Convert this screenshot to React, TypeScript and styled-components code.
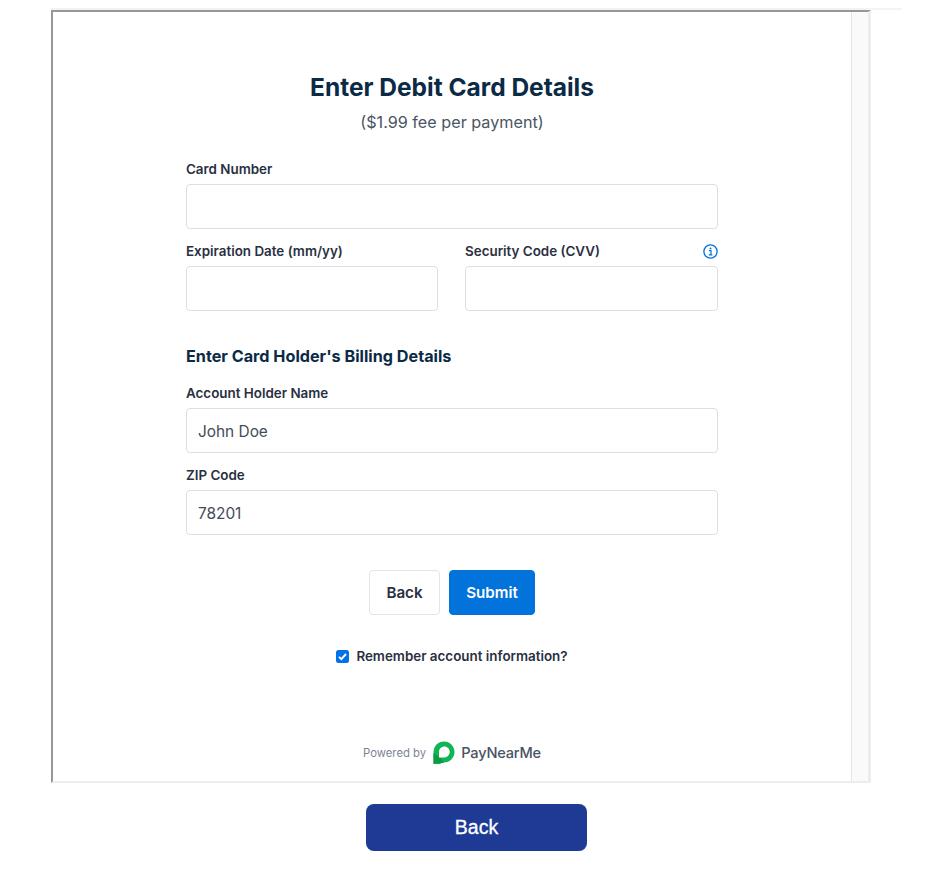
import React from "react";
import styled, { createGlobalStyle } from "styled-components";

const GlobalStyle = createGlobalStyle`
  html, body {
    margin: 0;
    padding: 0;
    background: #fff;
  }
`;

const Page = styled.div`
  width: 952px;
  height: 875px;
  padding: 8px 0 0 51px;
  box-sizing: border-box;
  overflow: hidden;
  display: flex;
  flex-direction: column;
  font-family: Inter, "Liberation Sans", sans-serif;
`;

const TopEdge = styled.div`
  width: 851px;
  height: 2px;
  background: #f3f3f3;
`;

const Frame = styled.div`
  width: 820px;
  height: 773px;
  box-sizing: border-box;
  display: flex;
  border-top: 2px solid #979797;
  border-left: 2px solid #979797;
  border-bottom: 2px solid #ededed;
  border-right: 3px solid #ededed;
`;

const Content = styled.div`
  flex: 1;
  display: flex;
  flex-direction: column;
  align-items: center;
  padding-top: 60px;
`;

const Scrollbar = styled.div`
  width: 16px;
  background: #fafafa;
  border-left: 1px solid #e6e6e6;
`;

const Title = styled.h1`
  margin: 0;
  font-size: 24.5px;
  line-height: 30px;
  font-weight: 700;
  color: #0b2a45;
`;

const Subtitle = styled.p`
  margin: 9px 0 0;
  font-size: 16.2px;
  line-height: 22px;
  color: #4b5563;
`;

const Form = styled.form`
  width: 532px;
  margin-top: 26px;
  display: flex;
  flex-direction: column;
`;

const Field = styled.div`
  min-width: 0;
  display: flex;
  flex-direction: column;
  margin-bottom: 12px;
`;

const LabelRow = styled.div`
  height: 20px;
  margin-bottom: 5px;
  display: flex;
  align-items: center;
  justify-content: space-between;
`;

const Label = styled.label`
  font-size: 13.4px;
  line-height: 20px;
  font-weight: 600;
  color: #2a3042;
`;

const Input = styled.input`
  width: 100%;
  height: 45px;
  box-sizing: border-box;
  padding: 2px 11px 0;
  border: 1px solid #dcdfe3;
  border-radius: 4px;
  background: #fff;
  font-family: inherit;
  font-size: 15.4px;
  color: #444b59;
  outline: none;
`;

const Row = styled.div`
  display: grid;
  grid-template-columns: 252px 253px;
  gap: 27px;
`;

const SectionTitle = styled.h2`
  margin: 21px 0 15px;
  font-size: 16.2px;
  line-height: 24px;
  font-weight: 700;
  color: #0b2a45;
`;

const Actions = styled.div`
  margin-top: 23px;
  display: flex;
  justify-content: center;
  gap: 9px;
`;

const Button = styled.button<{ $primary?: boolean }>`
  height: 45px;
  box-sizing: border-box;
  padding: 0;
  width: ${(p) => (p.$primary ? "86px" : "71px")};
  border: 1px solid ${(p) => (p.$primary ? "#0273db" : "#e2e4e7")};
  border-radius: 4px;
  background: ${(p) => (p.$primary ? "#0273db" : "#fff")};
  color: ${(p) => (p.$primary ? "#fff" : "#2a3042")};
  font-family: inherit;
  font-size: 15.2px;
  font-weight: 600;
`;

const Remember = styled.label`
  margin-top: 31px;
  display: flex;
  align-items: center;
  justify-content: center;
  gap: 7px;
  font-size: 13.4px;
  line-height: 20px;
  font-weight: 600;
  color: #2a3042;
`;

const Check = styled.span`
  width: 13px;
  height: 13px;
  border-radius: 2.5px;
  background: #0273e6;
  display: flex;
  align-items: center;
  justify-content: center;
`;

const Powered = styled.div`
  margin-top: 75px;
  display: flex;
  align-items: center;
  gap: 7px;
`;

const PoweredText = styled.span`
  font-size: 11.3px;
  color: #7b8494;
`;

const Brand = styled.span`
  font-size: 14.6px;
  font-weight: 500;
  letter-spacing: -0.2px;
  color: #4a5263;
  margin-left: -1px;
`;

const Footer = styled.div`
  width: 820px;
  margin-top: 21px;
  display: flex;
  justify-content: center;
`;

const BackLink = styled.button`
  width: 221px;
  height: 47px;
  margin-left: 31px;
  border: none;
  border-radius: 8px;
  background: #1e3a94;
  color: #fff;
  font-family: "Liberation Sans", Arial, sans-serif;
  font-size: 19.5px;
  -webkit-text-stroke: 0.3px #fff;
`;

const InfoIcon = () => (
  <svg width="15" height="15" viewBox="0 0 15 15" fill="none">
    <circle cx="7.5" cy="7.5" r="6.6" stroke="#0273db" strokeWidth="1.3" />
    <circle cx="7.5" cy="4.4" r="1" fill="#0273db" />
    <path d="M6 6.6h2v4M5.8 10.8h3.6" stroke="#0273db" strokeWidth="1.2" />
  </svg>
);

const CheckIcon = () => (
  <svg width="11" height="11" viewBox="0 0 11 11" fill="none">
    <path d="M2 5.8l2.4 2.4L9 3" stroke="#fff" strokeWidth="1.9" />
  </svg>
);

const Logo = () => (
  <svg width="22" height="23" viewBox="0 0 22 23">
    <path
      d="M11 0.5C16.8 0.5 21.5 5.2 21.5 11S16.8 21.5 11 21.5c-2 0-3 1-5 1.2H0.5V11C0.5 5.2 5.2 0.5 11 0.5Z"
      fill="#10b654"
    />
    <path d="M0.5 22.7V12L7 16.5 11 21.5c-2 0-3 1-5 1.2Z" fill="#0b9a45" />
    <path
      d="M11.3 5.6c3 0 5.4 2.4 5.4 5.4s-2.4 5.4-5.4 5.4H6V11c0-3 2.4-5.4 5.3-5.4Z"
      fill="#fff"
    />
  </svg>
);

const App = () => {
  return (
    <Page>
      <GlobalStyle />
      <TopEdge />
      <Frame>
        <Content>
          <Title>Enter Debit Card Details</Title>
          <Subtitle>($1.99 fee per payment)</Subtitle>
          <Form>
            <Field>
              <LabelRow>
                <Label>Card Number</Label>
              </LabelRow>
              <Input />
            </Field>
            <Row>
              <Field>
                <LabelRow>
                  <Label>Expiration Date (mm/yy)</Label>
                </LabelRow>
                <Input />
              </Field>
              <Field>
                <LabelRow>
                  <Label>Security Code (CVV)</Label>
                  <InfoIcon />
                </LabelRow>
                <Input />
              </Field>
            </Row>
            <SectionTitle>Enter Card Holder's Billing Details</SectionTitle>
            <Field>
              <LabelRow>
                <Label>Account Holder Name</Label>
              </LabelRow>
              <Input defaultValue="John Doe" />
            </Field>
            <Field>
              <LabelRow>
                <Label>ZIP Code</Label>
              </LabelRow>
              <Input defaultValue="78201" />
            </Field>
            <Actions>
              <Button type="button">Back</Button>
              <Button type="button" $primary>
                Submit
              </Button>
            </Actions>
            <Remember>
              <Check>
                <CheckIcon />
              </Check>
              Remember account information?
            </Remember>
          </Form>
          <Powered>
            <PoweredText>Powered by</PoweredText>
            <Logo />
            <Brand>PayNearMe</Brand>
          </Powered>
        </Content>
        <Scrollbar />
      </Frame>
      <Footer>
        <BackLink type="button">Back</BackLink>
      </Footer>
    </Page>
  );
};

export default App;
